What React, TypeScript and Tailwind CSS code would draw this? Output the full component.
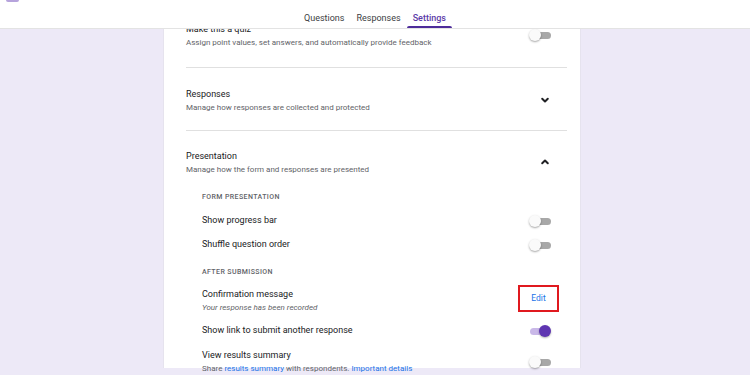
function Toggle({ on = false }: { on?: boolean }) {
  return (
    <div className="relative h-[12px] w-[22px] shrink-0">
      <div
        className={
          on
            ? "absolute left-[1px] right-[3px] top-[3px] h-[7px] rounded-full bg-[#c9b8e8]"
            : "absolute left-[4px] right-0 top-[3px] h-[7px] rounded-full bg-[#a8a8a8]"
        }
      />
      <div
        className={
          on
            ? "absolute right-0 top-0 h-[12px] w-[12px] rounded-full bg-[#5e35b1] shadow-[0_1px_2px_rgba(0,0,0,0.3)]"
            : "absolute left-0 top-0 h-[12px] w-[12px] rounded-full bg-[#fafafa] shadow-[0_1px_2px_rgba(0,0,0,0.35)]"
        }
      />
    </div>
  );
}

function Chevron({ up = false }: { up?: boolean }) {
  return (
    <svg width="10" height="10" viewBox="0 0 10 10" className="shrink-0">
      <path
        d={up ? "M2.2 6.3 L5 3.5 L7.8 6.3" : "M2.2 3.7 L5 6.5 L7.8 3.7"}
        fill="none"
        stroke="#202124"
        strokeWidth="2"
        strokeLinecap="round"
        strokeLinejoin="round"
      />
    </svg>
  );
}

function SectionLabel({ children }: { children: string }) {
  return (
    <div className="pl-4 text-[7px] font-medium uppercase leading-[12px] tracking-[0.4px] text-[#5f6368]">
      {children}
    </div>
  );
}

function Row({ title, on }: { title: string; on?: boolean }) {
  return (
    <div className="flex h-[24px] items-center justify-between pl-4 pr-4">
      <span className="text-[9px] text-[#202124]">{title}</span>
      <Toggle on={on} />
    </div>
  );
}

export default function App() {
  return (
    <div className="flex h-[375px] w-[750px] flex-col overflow-hidden bg-[#ede9f7] font-['Roboto',sans-serif]">
      <header className="relative z-10 flex h-[29px] shrink-0 items-end justify-center border-b border-[#e3e3e3] bg-white">
        <div className="absolute left-[6px] top-0 h-[2px] w-[13px] rounded-b-full bg-[#b6a3dc]" />
        <nav className="flex text-[9px]">
          <div className="px-[6px] pb-[3px] text-[#3c4043]">Questions</div>
          <div className="px-[6px] pb-[3px] text-[#3c4043]">Responses</div>
          <div className="relative px-[6px] pb-[3px] font-medium text-[#5b3aa8]">
            Settings
            <div className="absolute bottom-0 left-0 right-0 h-[2px] rounded-t-sm bg-[#4d2c9a]" />
          </div>
        </nav>
      </header>

      <main className="flex-1 overflow-hidden">
        <div className="ml-[163px] h-full w-[418px] border-x border-[#e6e3ee] bg-white pl-[22px] pr-[13px]">
          {/* Make this a quiz */}
          <section className="-mt-[7px] flex items-center justify-between border-b border-[#e0e0e0] pb-[17px]">
            <div>
              <div className="text-[9px] leading-[14px] text-[#202124]">Make this a quiz</div>
              <div className="text-[8px] leading-[14px] text-[#5f6368]">
                Assign point values, set answers, and automatically provide feedback
              </div>
            </div>
            <div className="mr-4 -mt-[2px]">
              <Toggle />
            </div>
          </section>

          {/* Responses */}
          <section className="flex items-center justify-between border-b border-[#e0e0e0] pb-[15px] pt-[19px]">
            <div>
              <div className="text-[9px] leading-[14px] text-[#202124]">Responses</div>
              <div className="text-[8px] leading-[14px] text-[#5f6368]">
                Manage how responses are collected and protected
              </div>
            </div>
            <div className="mr-[17px] -mt-[3px]">
              <Chevron />
            </div>
          </section>

          {/* Presentation */}
          <section className="pt-[18px]">
            <div className="flex items-center justify-between">
              <div>
                <div className="text-[9px] leading-[14px] text-[#202124]">Presentation</div>
                <div className="text-[8px] leading-[14px] text-[#5f6368]">
                  Manage how the form and responses are presented
                </div>
              </div>
              <div className="mr-[17px] -mt-[3px]">
                <Chevron up />
              </div>
            </div>

            <div className="mt-[14px]">
              <SectionLabel>Form presentation</SectionLabel>
            </div>
            <div className="mt-[6px]">
              <Row title="Show progress bar" />
              <Row title="Shuffle question order" />
            </div>

            <div className="mt-[9px]">
              <SectionLabel>After submission</SectionLabel>
            </div>

            <div className="mt-[9px] flex items-start justify-between pl-4 pr-[8px]">
              <div>
                <div className="text-[9px] leading-[14px] text-[#202124]">Confirmation message</div>
                <div className="text-[8px] italic leading-[14px] text-[#5f6368]">
                  Your response has been recorded
                </div>
              </div>
              <div className="-mt-[2px] flex h-[27px] w-[41px] items-center justify-center border-2 border-[#e0191f] text-[8.5px] text-[#1a73e8]">
                Edit
              </div>
            </div>

            <div className="mt-[4px]">
              <Row title="Show link to submit another response" on />
            </div>

            <div className="mt-[5px] flex items-center justify-between pl-4 pr-4">
              <div>
                <div className="text-[9px] leading-[14px] text-[#202124]">View results summary</div>
                <div className="text-[8px] leading-[14px] text-[#5f6368]">
                  Share <span className="text-[#1a73e8]">results summary</span> with respondents.{" "}
                  <span className="text-[#1a73e8]">Important details</span>
                </div>
              </div>
              <Toggle />
            </div>
          </section>
        </div>
      </main>
    </div>
  );
}
